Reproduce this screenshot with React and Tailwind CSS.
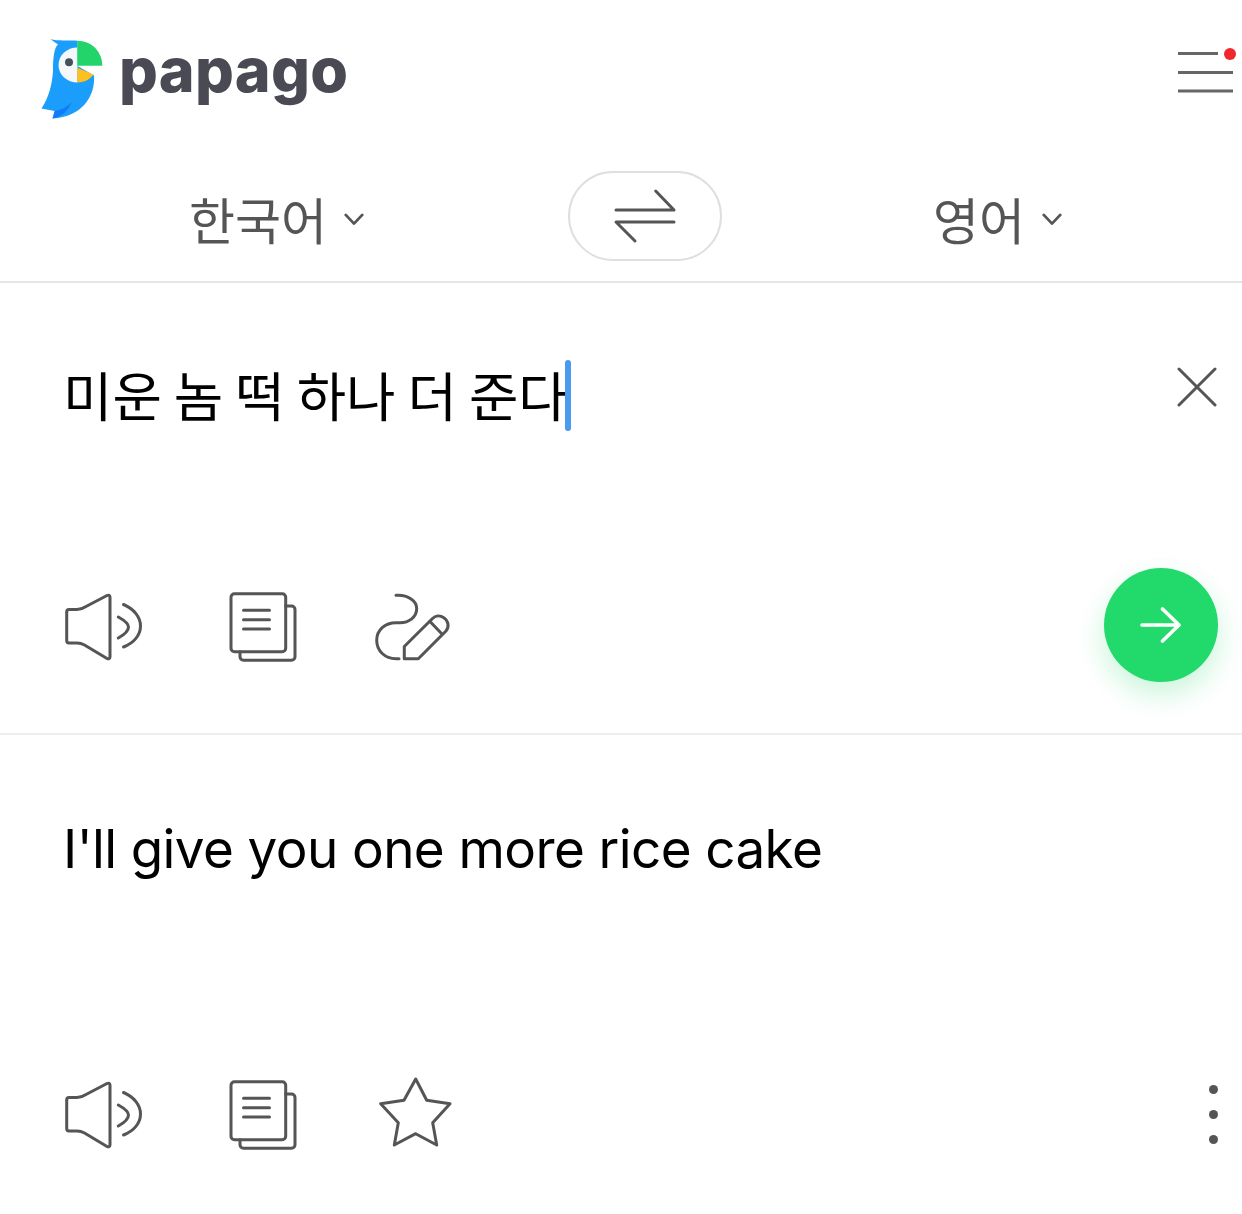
import React from 'react';

const cjk = { fontFamily: '"Noto Sans CJK KR", sans-serif' };

function Logo() {
  return (
    <svg viewBox="41 39 62 80" className="w-[62px] h-[80px] shrink-0">
      <path d="M50.5 39.2 C58 41 68 40 77.5 40.7 L77.5 66 L94 75.5 C95.5 96 82 117 52.5 118.5 L54.5 111 L41.5 108.5 C49 97 52 85 53 71 C53 58 54 48 58 44.5 Z" fill="#1a9dfb" />
      <path d="M52.5 118.5 C62 117 69 110 71.5 102 C66 108 60 110 55 111 Z" fill="#0f7df7" />
      <path d="M77.5 47.5 C67 47.5 58.5 55 58.5 65 C58.5 75 67 82.5 77.5 82.5 Z" fill="#f4f8fb" />
      <circle cx="69" cy="62.3" r="4" fill="#46505c" />
      <path d="M77.3 40.7 C92 40.7 102.3 52 102.3 65.7 L77.3 65.7 Z" fill="#22d469" />
      <path d="M77.3 67.7 L93.5 74.5 C90 79.5 84 82.5 77.3 82.5 Z" fill="#fcc11e" />
    </svg>
  );
}

function MenuIcon() {
  return (
    <svg viewBox="1170 42 72 60" className="w-[72px] h-[60px]">
      <g stroke="#666" strokeWidth="2.8">
        <path d="M1178 53.5 H1218" />
        <path d="M1178 72.5 H1233" />
        <path d="M1178 91 H1233" />
      </g>
      <circle cx="1230" cy="54" r="6" fill="#f0282d" />
    </svg>
  );
}

function Chevron() {
  return (
    <svg viewBox="0 0 24 14" className="w-[22px] h-[13px] ml-[16px] mt-[6px]" fill="none" stroke="#555" strokeWidth="3" strokeLinecap="round" strokeLinejoin="round">
      <path d="M3 2 L12 11.5 L21 2" />
    </svg>
  );
}

function SwapIcon() {
  return (
    <svg viewBox="612 188 66 56" className="w-[66px] h-[56px]" fill="none" stroke="#555" strokeWidth="3" strokeLinecap="round" strokeLinejoin="round">
      <path d="M616 210 H674 L655.7 191" />
      <path d="M674 222 H616 L635 241" />
    </svg>
  );
}

function SpeakerIcon() {
  return (
    <svg viewBox="64 592 80 68" className="w-[80px] h-[68px]" fill="none" stroke="#555" strokeWidth="3" strokeLinecap="round" strokeLinejoin="round">
      <path d="M69 608.5 C67.5 608.5 66.7 609.5 66.7 611 V639.5 C66.7 641 67.5 642 69 642 H77 C80 642 82 642.6 84.5 644 L107 657.5 C108.5 658.3 110 657.5 110 656 V596 C110 594.5 108.5 593.7 107 594.5 L86 605.5 C83 607.5 80 608.5 77 608.5 Z" />
      <path d="M118.3 616 C125.5 620 128.5 623.5 128.5 626 C128.5 629 125.5 633 118.3 637" />
      <path d="M123.5 603.5 C134 608 140.5 616 140.5 625 C140.5 634 134 642 123.5 646" />
    </svg>
  );
}

function DocIcon() {
  return (
    <svg viewBox="229 591 68 70" className="w-[68px] h-[70px]" fill="none" stroke="#555" strokeWidth="3" strokeLinecap="round" strokeLinejoin="round">
      <rect x="231" y="592.7" width="54.7" height="58" rx="3.5" />
      <path d="M285.7 605 H291.5 C293.5 605 295 606.5 295 608.5 V655.8 C295 657.8 293.5 659.3 291.5 659.3 H243.5 C241.5 659.3 240 657.8 240 655.8 V650.7" />
      <path d="M243.5 609.3 H269.5 M243.5 618.7 H269.5 M243.5 628 H269.5" />
    </svg>
  );
}

function HandwriteIcon() {
  return (
    <svg viewBox="374 591 77 68" className="w-[77px] h-[68px]" fill="none" stroke="#555" strokeWidth="3" strokeLinecap="round" strokeLinejoin="round">
      <path d="M396 593.3 H398 C408 593.3 416.7 598.5 416.7 606.5 C416.7 615 409 620.7 400 620.7 H396 C385 620.7 376.7 628 376.7 638.3 C376.7 649 385 656.7 396 656.7 H399" />
      <path d="M404.3 656.7 V644.5 L432.5 616.5 C435.5 613.5 440 613 443.5 615.5 C448.5 618.5 449.5 625 446 629 L418.3 656.7 Z" />
      <path d="M430 619.5 L441.5 631.5" />
    </svg>
  );
}

function StarIcon() {
  return (
    <svg viewBox="379 1076 73 70" className="w-[73px] h-[70px]" fill="none" stroke="#555" strokeWidth="3" strokeLinecap="round" strokeLinejoin="round">
      <path d="M415.7 1078 L426.7 1099.3 L450 1102.7 L432.7 1121.7 L436.7 1144 L415.7 1132.7 L394.3 1144 L398.3 1121.7 L380.7 1102.7 L404 1099.3 Z" />
    </svg>
  );
}

function CloseIcon() {
  return (
    <svg viewBox="0 0 40 40" className="w-[40px] h-[40px]" fill="none" stroke="#555" strokeWidth="3" strokeLinecap="round">
      <path d="M2 2 L38 38 M38 2 L2 38" />
    </svg>
  );
}

function ArrowIcon() {
  return (
    <svg viewBox="0 0 42 36" className="w-[42px] h-[36px]" fill="none" stroke="#fff" strokeWidth="3.6" strokeLinecap="round" strokeLinejoin="round">
      <path d="M2 18 H38 M22.5 2 L39 18 L22.5 34" />
    </svg>
  );
}

function App() {
  return (
    <div className="w-[1242px] h-[1214px] bg-white overflow-hidden flex flex-col" style={{ fontFamily: 'Inter, sans-serif' }}>
      <header className="h-[150px] pl-[41px] flex items-start">
        <div className="flex items-center mt-[39px] gap-[16px]">
          <Logo />
          <span className="text-[61px] leading-[70px] font-extrabold text-[#4a4a55] tracking-[0.3px] -mt-[18px]">papago</span>
        </div>
        <div className="ml-auto mt-[42px]">
          <MenuIcon />
        </div>
      </header>

      <div className="h-[133px] flex items-start border-b-2 border-[#e5e5e5]">
        <div className="w-[568px] pl-[189px] h-[90px] mt-[21px] flex items-center" style={cjk}>
          <span className="text-[50px] leading-[60px] font-normal text-[#555] mt-[4px]">한국어</span>
          <Chevron />
        </div>
        <div className="w-[154px] h-[90px] mt-[21px] rounded-full border-2 border-[#dfdfdf] flex items-center justify-center">
          <SwapIcon />
        </div>
        <div className="pl-[211px] h-[90px] mt-[21px] flex items-center" style={cjk}>
          <span className="text-[50px] leading-[60px] font-normal text-[#555] mt-[4px]">영어</span>
          <Chevron />
        </div>
      </div>

      <section className="h-[452px] border-b-2 border-[#eeeeee] flex flex-col justify-between pb-[51px]">
        <div className="flex items-start pt-[77px] pl-[63px] pr-[25px]">
          <div className="flex items-center h-[71px]">
            <span className="text-[53.7px] leading-[71px] text-black -mt-[5px]" style={cjk}>미운 놈 떡 하나 더 준다</span>
            <span className="w-[6px] h-[71px] rounded-full bg-[#4a9bf0] -ml-[3px]" />
          </div>
          <div className="ml-auto mt-[7px]">
            <CloseIcon />
          </div>
        </div>
        <div className="flex items-center pl-[64px] pr-[24px]">
          <div className="mt-[3px]"><SpeakerIcon /></div>
          <div className="ml-[85px] mt-[3px]"><DocIcon /></div>
          <div className="ml-[77px] mt-[3px]"><HandwriteIcon /></div>
          <button className="ml-auto w-[114px] h-[114px] rounded-full bg-[#22d96b] flex items-center justify-center shadow-[0_12px_28px_rgba(34,217,107,0.25)]">
            <ArrowIcon />
          </button>
        </div>
      </section>

      <section className="flex-1 flex flex-col justify-between pb-[61px]">
        <div className="pt-[84px] pl-[63px] text-[53px] leading-[60px] text-black tracking-[-0.6px]">I'll give you one more rice cake</div>
        <div className="flex items-center pl-[64px] pr-[24px]">
          <SpeakerIcon />
          <div className="ml-[85px]"><DocIcon /></div>
          <div className="ml-[82px] mb-[6px]"><StarIcon /></div>
          <div className="ml-auto flex flex-col gap-[16px] mb-[2px]">
            <span className="w-[9px] h-[9px] rounded-full bg-[#555]" />
            <span className="w-[9px] h-[9px] rounded-full bg-[#555]" />
            <span className="w-[9px] h-[9px] rounded-full bg-[#555]" />
          </div>
        </div>
      </section>
    </div>
  );
}

export default App;
